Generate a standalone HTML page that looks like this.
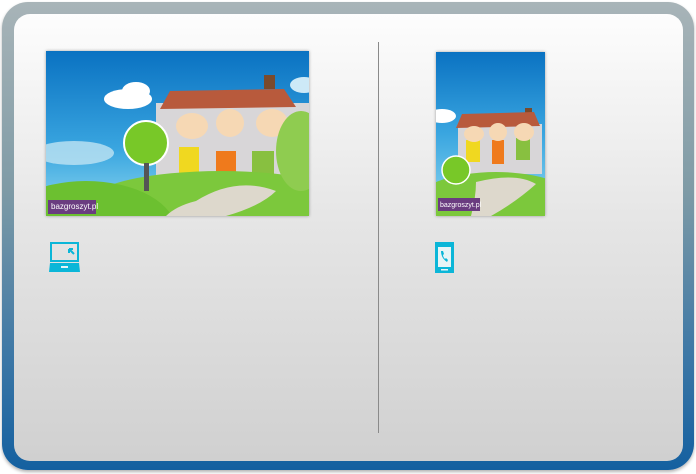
<!DOCTYPE html>
<html><head><style>
html,body{margin:0;padding:0;width:696px;height:474px;overflow:hidden;background:#fff;font-family:"Liberation Sans",sans-serif}
.outer{position:absolute;left:2px;top:2px;width:692px;height:468px;border-radius:26px;background:linear-gradient(#a8b4b8 0%,#7f9ba6 40%,#3e78a6 75%,#1460a0 100%);box-shadow:0 2px 3px rgba(0,0,0,.3)}
.inner{position:absolute;left:14px;top:14px;width:669px;height:447px;border-radius:16px;background:linear-gradient(#fdfdfd 0%,#e6e6e6 45%,#d0d0d0 100%)}
.div{position:absolute;left:378px;top:42px;width:1px;height:391px;background:#8a8a8a}
.img{position:absolute;box-shadow:0 0 3px rgba(0,0,0,.35)}
</style></head><body>
<div class="outer"></div>
<div class="inner"></div>
<div class="div"></div>

<svg class="img" style="left:46px;top:51px" width="263" height="165" viewBox="0 0 263 165">
<defs><linearGradient id="sk" x1="0" y1="0" x2="0" y2="1"><stop offset="0" stop-color="#0a72c2"/><stop offset=".6" stop-color="#3aa6e0"/><stop offset="1" stop-color="#8fd8f0"/></linearGradient></defs>
<rect width="263" height="165" fill="url(#sk)"/>
<ellipse cx="28" cy="102" rx="40" ry="12" fill="#bfe3f2" opacity=".8"/>
<ellipse cx="82" cy="48" rx="24" ry="10" fill="#fff"/><ellipse cx="90" cy="40" rx="14" ry="9" fill="#fff"/>
<ellipse cx="258" cy="34" rx="14" ry="8" fill="#cde9f7"/>
<rect x="110" y="52" width="178" height="150" fill="#d8d6d8"/>
<rect x="218" y="24" width="11" height="14" fill="#7a4a2c"/>
<path d="M114 58 L124 40 L238 38 L250 56 Z" fill="#b85a3c"/>
<rect x="170" y="100" width="20" height="50" fill="#ef7a1c"/>
<rect x="133" y="96" width="20" height="50" fill="#f0d820"/>
<rect x="206" y="100" width="22" height="46" fill="#88c040"/>
<ellipse cx="146" cy="75" rx="16" ry="13" fill="#f6d8b4"/><ellipse cx="184" cy="72" rx="14" ry="14" fill="#f6d8b4"/><ellipse cx="226" cy="72" rx="16" ry="14" fill="#f6d8b4"/>
<ellipse cx="175" cy="150" rx="130" ry="30" fill="#7cc83c"/>
<ellipse cx="40" cy="180" rx="90" ry="50" fill="#6cc030"/>
<ellipse cx="255" cy="100" rx="25" ry="40" fill="#8fcc50"/>
<path d="M150 150 Q190 125 230 140 Q215 155 180 165 L120 165 Q130 155 150 150Z" fill="#ddd8cc"/>
<circle cx="100" cy="92" r="22" fill="#78c828" stroke="#fff" stroke-width="2"/>
<rect x="98" y="112" width="5" height="28" fill="#555"/>
<rect x="2" y="149" width="48" height="14" fill="#6a3c80"/><text x="5" y="158" font-size="8" fill="#fff">bazgroszyt.pl</text>
</svg>

<svg class="img" style="left:436px;top:52px" width="109" height="164" viewBox="0 0 109 164">
<defs><linearGradient id="sk2" x1="0" y1="0" x2="0" y2="1"><stop offset="0" stop-color="#0a72c2"/><stop offset=".5" stop-color="#3aa6e0"/><stop offset="1" stop-color="#8fd8f0"/></linearGradient></defs>
<rect width="109" height="164" fill="url(#sk2)"/>
<ellipse cx="6" cy="64" rx="14" ry="7" fill="#fff"/>
<rect x="22" y="72" width="84" height="50" fill="#d8d6d8"/>
<rect x="89" y="56" width="7" height="10" fill="#7a4a2c"/>
<path d="M20 76 L26 62 L98 60 L104 74 Z" fill="#b85a3c"/>
<rect x="30" y="88" width="14" height="22" fill="#f0d820"/><rect x="56" y="88" width="12" height="24" fill="#ef7a1c"/><rect x="80" y="86" width="14" height="22" fill="#88c040"/>
<ellipse cx="38" cy="82" rx="10" ry="8" fill="#f6d8b4"/><ellipse cx="62" cy="80" rx="9" ry="9" fill="#f6d8b4"/><ellipse cx="88" cy="80" rx="10" ry="9" fill="#f6d8b4"/>
<ellipse cx="60" cy="150" rx="80" ry="30" fill="#7cc83c"/>
<path d="M40 130 Q80 120 100 132 Q80 150 55 164 L35 164 Q40 145 40 130Z" fill="#ddd8cc"/>
<circle cx="20" cy="118" r="14" fill="#78c828" stroke="#fff" stroke-width="1.5"/>
<rect x="2" y="146" width="42" height="13" fill="#6a3c80"/><text x="4" y="155" font-size="7" fill="#fff">bazgroszyt.pl</text>
</svg>

<svg style="position:absolute;left:48px;top:242px" width="33" height="31" viewBox="0 0 33 31">
<rect x="3" y="1" width="27" height="18" fill="none" stroke="#0bb6d8" stroke-width="2"/>
<path d="M21 7 L26 12 M21 7 L21 11 M21 7 L25 7" stroke="#0bb6d8" stroke-width="2" fill="none"/>
<path d="M2 21 L31 21 L32 30 L1 30 Z" fill="#0bb6d8"/>
<rect x="13" y="24" width="7" height="2" fill="#e4f6fa"/>
</svg>
<svg style="position:absolute;left:435px;top:242px" width="19" height="32" viewBox="0 0 19 32">
<rect x="0" y="0" width="19" height="31" fill="#0bb6d8"/>
<rect x="3" y="5" width="13" height="20" fill="#e8f4f6"/>
<path d="M6 9 Q6 16 12 20 L13 18 L11 16 L10 17 Q8 15 8 13 L9 12 L8 9 Z" fill="#0bb6d8"/>
<rect x="6" y="27" width="7" height="1.5" fill="#e8f4f6"/>
</svg>
</body></html>
